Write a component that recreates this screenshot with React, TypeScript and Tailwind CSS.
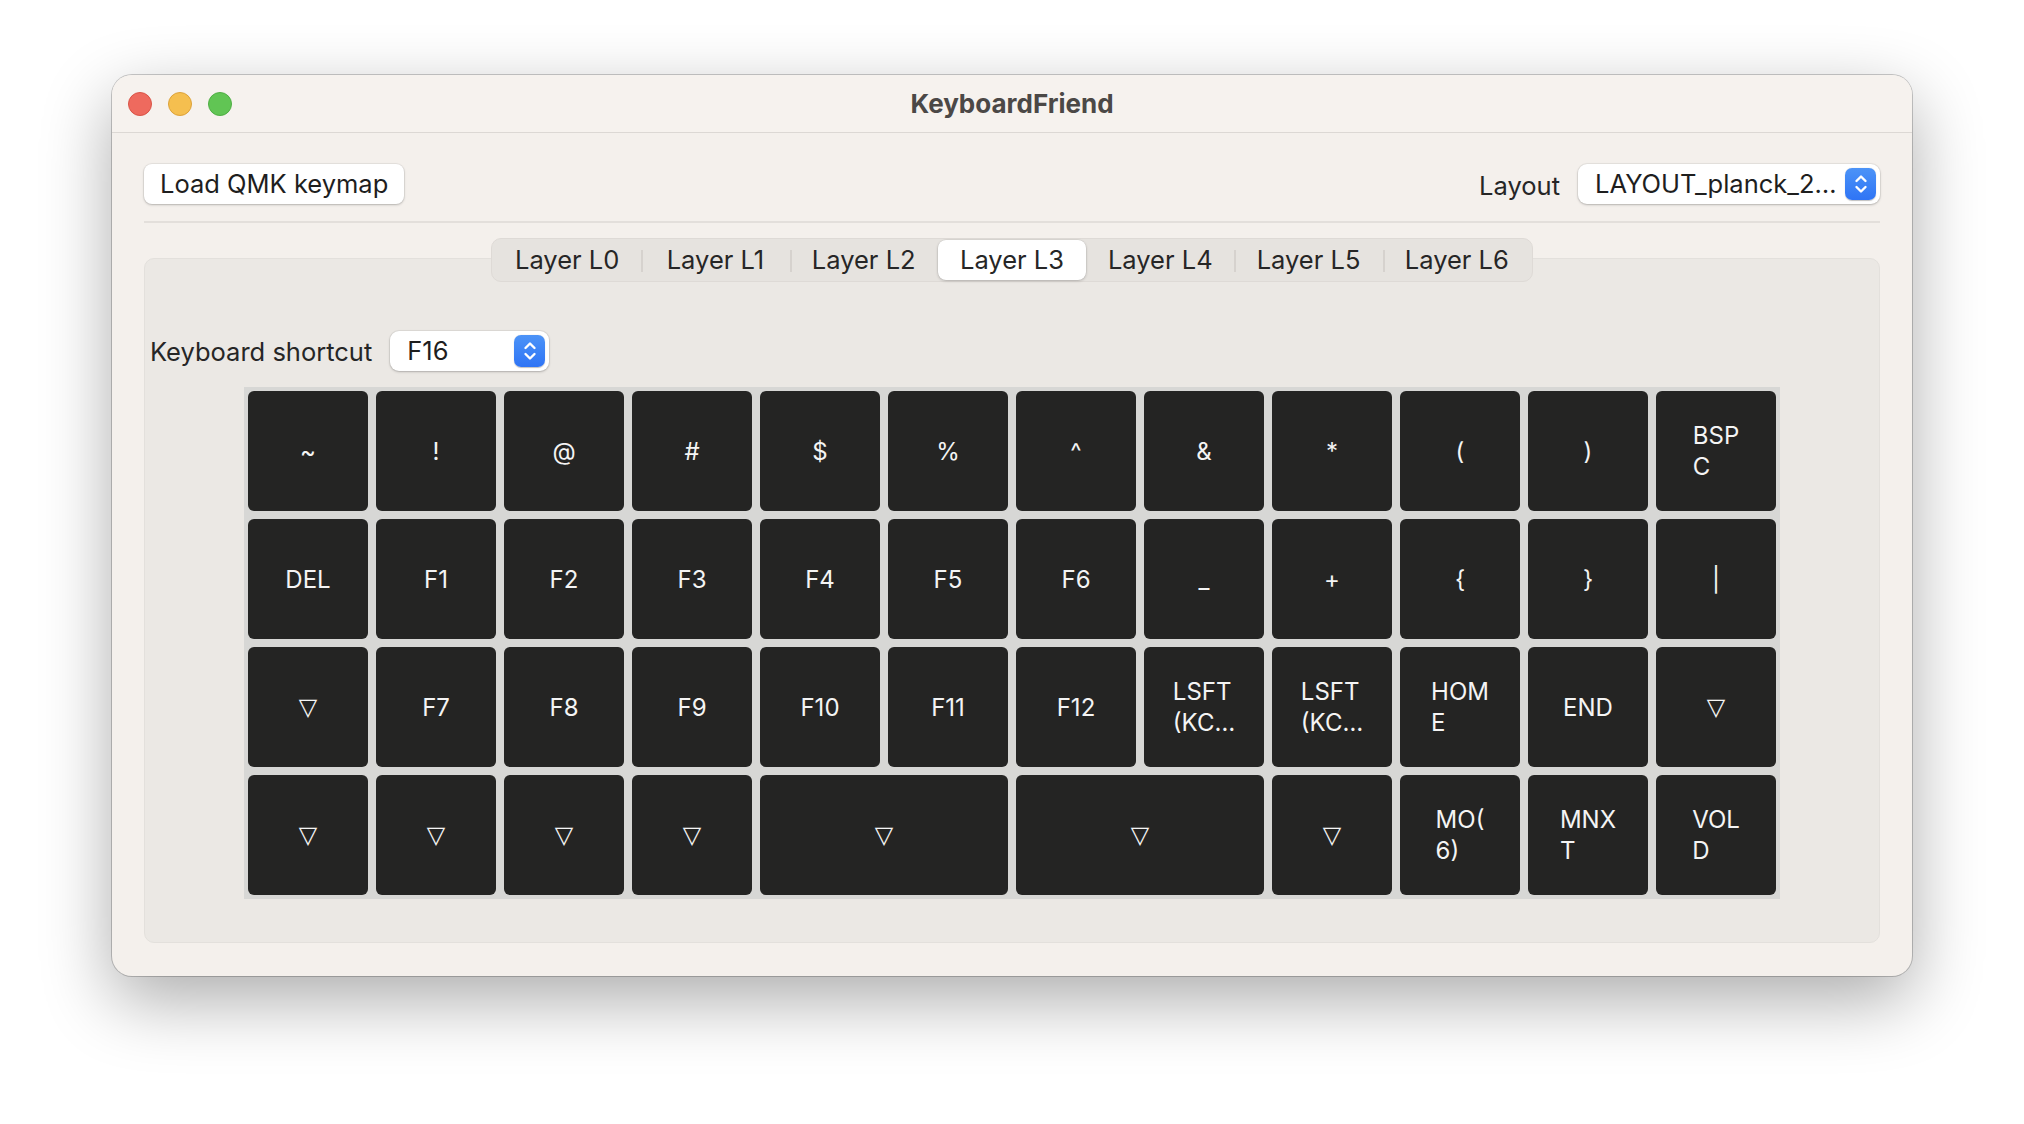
import React from "react";

type KeyDef = { lines: string[]; span?: number };

const k = (s: string, span = 1): KeyDef => ({ lines: s.split("\n"), span });

const rows: KeyDef[][] = [
  [k("~"), k("!"), k("@"), k("#"), k("$"), k("%"), k("^"), k("&"), k("*"), k("("), k(")"), k("BSP\nC")],
  [k("DEL"), k("F1"), k("F2"), k("F3"), k("F4"), k("F5"), k("F6"), k("_"), k("+"), k("{"), k("}"), k("|")],
  [k("▽"), k("F7"), k("F8"), k("F9"), k("F10"), k("F11"), k("F12"), k("LSFT\n(KC…"), k("LSFT\n(KC…"), k("HOM\nE"), k("END"), k("▽")],
  [k("▽"), k("▽"), k("▽"), k("▽"), k("▽", 2), k("▽", 2), k("▽"), k("MO(\n6)"), k("MNX\nT"), k("VOL\nD")],
];

const layers = ["Layer L0", "Layer L1", "Layer L2", "Layer L3", "Layer L4", "Layer L5", "Layer L6"];
const selected = 3;

function Stepper() {
  return (
    <div className="flex h-[32px] w-[31px] items-center justify-center rounded-[7px] bg-gradient-to-b from-[#4c93f7] to-[#2f74f5] shadow-[0_0.5px_1px_rgba(0,0,0,0.25)]">
      <svg width="14" height="22" viewBox="0 0 14 22" fill="none">
        <path d="M2.5 8 L7 3.5 L11.5 8" stroke="white" strokeWidth="2.4" strokeLinecap="round" strokeLinejoin="round" />
        <path d="M2.5 14 L7 18.5 L11.5 14" stroke="white" strokeWidth="2.4" strokeLinecap="round" strokeLinejoin="round" />
      </svg>
    </div>
  );
}

function Popup({ value, width }: { value: string; width: string }) {
  return (
    <div
      className={`flex h-[40px] ${width} items-center justify-between rounded-[9px] bg-white pl-[17px] pr-[4px] shadow-[0_0_0_1px_rgba(0,0,0,0.05),0_1px_2.5px_rgba(0,0,0,0.22)]`}
    >
      <span className="truncate text-[#1e1e1e]">{value}</span>
      <Stepper />
    </div>
  );
}

export default function App() {
  return (
    <div
      className="flex min-h-[1124px] w-full justify-center bg-white pt-[75px]"
      style={{ fontFamily: "Inter, 'Noto Sans', sans-serif" }}
    >
      <div className="h-[901px] w-[1800px] overflow-hidden rounded-[20px] bg-[#f4f0ec] text-[25.5px] text-[#262626] shadow-[0_0_0_1px_rgba(0,0,0,0.2),0_24px_70px_rgba(0,0,0,0.33)]">
        {/* Title bar */}
        <div className="grid h-[58px] grid-cols-[1fr_auto_1fr] items-center border-b border-[#dcd8d4] bg-[#f6f2ee]">
          <div className="flex items-center gap-[16px] pl-[16px]">
            <div className="h-[24px] w-[24px] rounded-full border border-[#d95447] bg-[#ee6a5e]" />
            <div className="h-[24px] w-[24px] rounded-full border border-[#dca23a] bg-[#f5bf4f]" />
            <div className="h-[24px] w-[24px] rounded-full border border-[#4fae44] bg-[#61c554]" />
          </div>
          <div className="text-[26px] font-bold text-[#4b4846]">KeyboardFriend</div>
          <div />
        </div>

        {/* Content */}
        <div className="px-[32px] pt-[31px]">
          <div className="flex h-[40px] items-center justify-between">
            <button className="flex h-[40px] items-center rounded-[8px] bg-white px-[16px] text-[#1e1e1e] shadow-[0_0_0_1px_rgba(0,0,0,0.05),0_1px_2.5px_rgba(0,0,0,0.22)]">
              Load QMK keymap
            </button>
            <div className="flex items-center gap-[18px]">
              <span className="pt-[4px]">Layout</span>
              <Popup value="LAYOUT_planck_2…" width="w-[302px]" />
            </div>
          </div>

          <div className="mt-[17px] h-[2px] bg-[#e3dfdb]" />

          {/* Segmented control */}
          <div className="relative z-10 mx-auto mt-[15px] flex h-[44px] w-[1042px] rounded-[10px] border border-[#dedad6] bg-[#e6e3df] p-[1px]">
            {layers.map((l, i) => (
              <div
                key={l}
                className={`relative flex flex-1 items-center justify-center ${
                  i === selected
                    ? "rounded-[8px] bg-white shadow-[0_0_0_0.5px_rgba(0,0,0,0.08),0_1px_3px_rgba(0,0,0,0.2)]"
                    : ""
                }`}
              >
                {i > 0 && i !== selected && i - 1 !== selected && (
                  <span className="absolute left-0 top-[10px] h-[22px] w-[2px] bg-[#d6d2ce]" />
                )}
                <span className="text-[#262626]">{l}</span>
              </div>
            ))}
          </div>

          {/* Panel */}
          <div className="-mt-[24px] rounded-[10px] border border-[#e3e0dc] bg-[#ebe8e4] px-[5px] pb-[43px] pt-[72px]">
            <div className="flex h-[40px] items-center gap-[18px]">
              <span className="pt-[2px]">Keyboard shortcut</span>
              <Popup value="F16" width="w-[159px]" />
            </div>

            <div className="mx-auto mt-[16px] grid w-[1536px] grid-cols-[repeat(12,120px)] grid-rows-[repeat(4,120px)] gap-[8px] bg-[#d7d7d5] p-[4px]">
              {rows.map((row, ri) =>
                row.map((key, ki) => (
                  <div
                    key={`${ri}-${ki}`}
                    className={`flex items-center justify-center rounded-[6px] bg-[#242423] text-[24px] leading-[31px] text-[#f4f4f4] ${
                      key.span === 2 ? "col-span-2" : ""
                    }`}
                  >
                    <div className="inline-block text-left">
                      {key.lines.map((ln, li) => (
                        <div key={li} className={ln === "▽" ? "font-['DejaVu_Sans'] text-[24px]" : ""}>
                          {ln}
                        </div>
                      ))}
                    </div>
                  </div>
                ))
              )}
            </div>
          </div>
        </div>
      </div>
    </div>
  );
}
